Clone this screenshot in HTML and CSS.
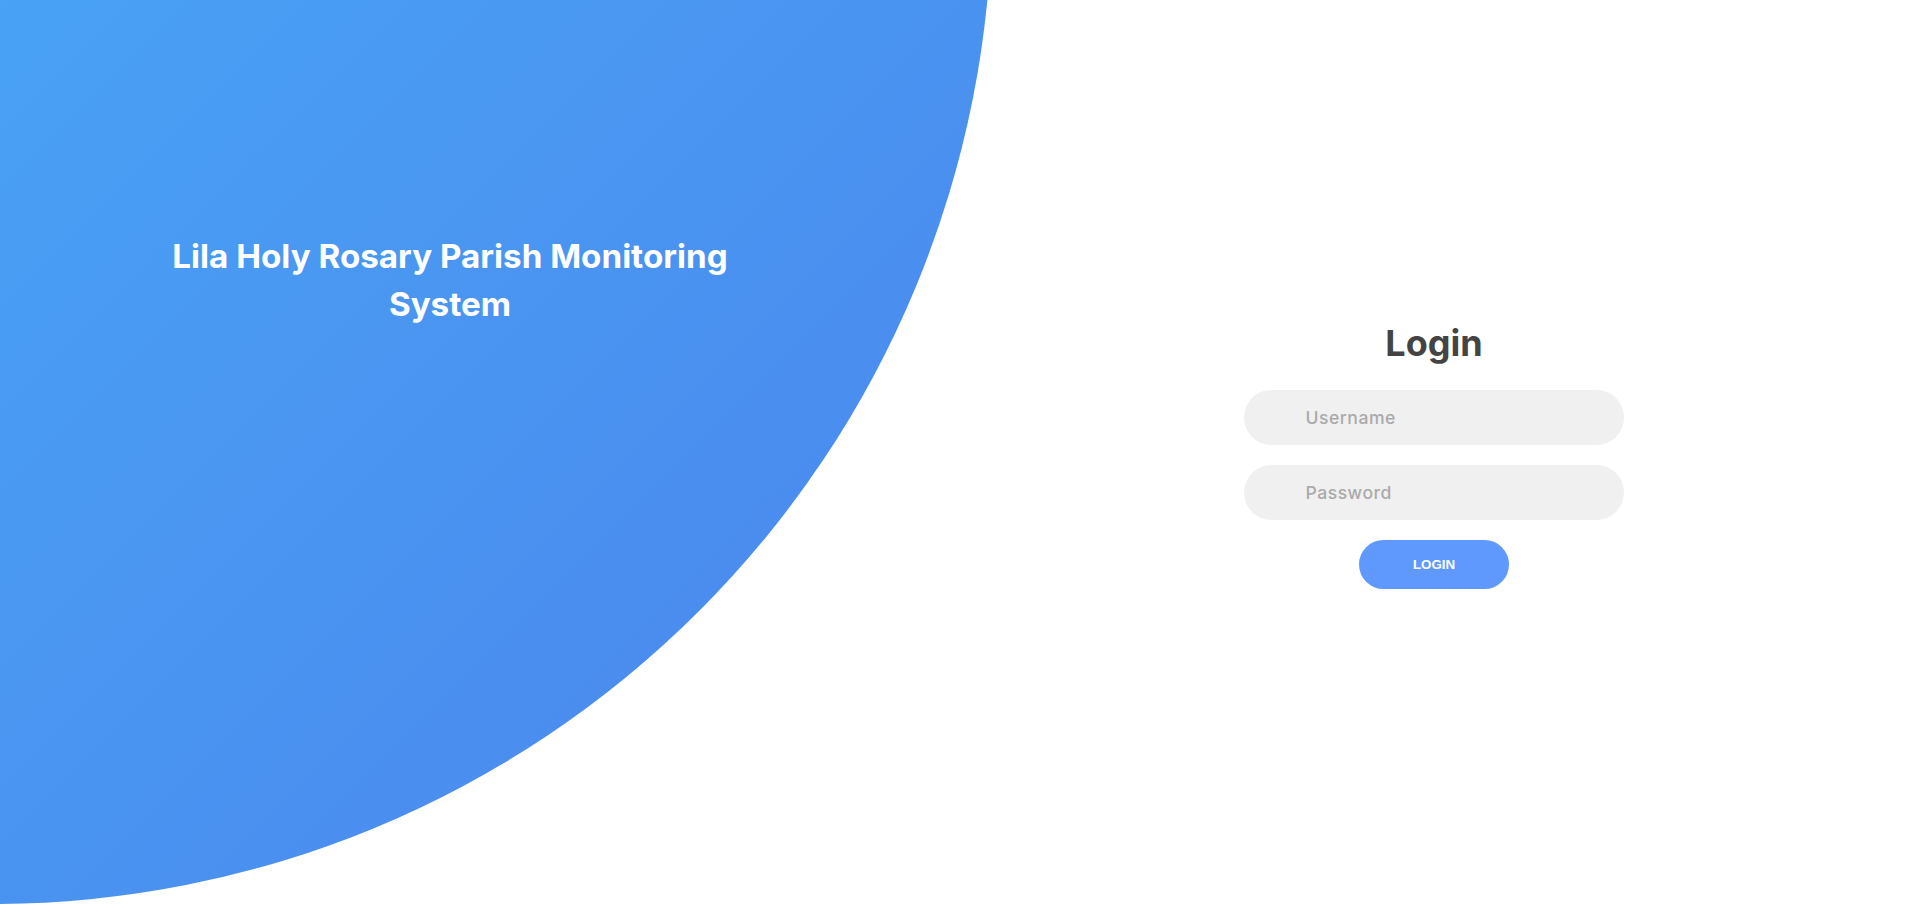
FILE: index.html
```html
<!DOCTYPE html>
<html lang="en">
<head>
<meta charset="utf-8">
<title>Login</title>
<link rel="stylesheet" href="styles.css">
</head>
<body>
<div class="container">
  <div class="circle"></div>
  <section class="panel">
    <h3 class="brand">Lila Holy Rosary Parish Monitoring System</h3>
  </section>
  <section class="form-side">
    <form class="sign-in-form" onsubmit="return false;">
      <h2 class="title">Login</h2>
      <div class="input-field">
        <span class="icon"></span>
        <input type="text" placeholder="Username">
      </div>
      <div class="input-field">
        <span class="icon"></span>
        <input type="password" placeholder="Password">
      </div>
      <button type="submit" class="btn">Login</button>
    </form>
  </section>
</div>
</body>
</html>
```

FILE: styles.css
```css
* {
  box-sizing: border-box;
}

html, body {
  margin: 0;
  padding: 0;
}

body {
  font-family: "Inter", "Open Sans", sans-serif;
  background: #fff;
}

.container {
  position: relative;
  width: 100%;
  height: 916px;
  overflow: hidden;
  display: grid;
  grid-template-columns: 954px 960px;
}

.circle {
  position: absolute;
  left: -1008px;
  top: -1096px;
  width: 2000px;
  height: 2000px;
  border-radius: 50%;
  background-image: linear-gradient(-45deg, #4b84ec 0%, #46c2fe 100%);
  z-index: 0;
}

.panel {
  position: relative;
  z-index: 1;
  padding: 232px 0 0 140px;
}

.brand {
  width: 620px;
  margin: 0;
  color: #fff;
  text-align: center;
  font-size: 33.2px;
  font-weight: 700;
  line-height: 48px;
}

.form-side {
  position: relative;
  z-index: 1;
  display: flex;
  align-items: center;
  justify-content: center;
}

.sign-in-form {
  display: flex;
  flex-direction: column;
  align-items: center;
  width: 380px;
}

.title {
  margin: 0 0 10px;
  font-size: 36px;
  font-weight: 700;
  color: #444;
  line-height: 52.8px;
}

.input-field {
  width: 380px;
  height: 55px;
  margin: 10px 0;
  padding: 0 6.4px;
  border-radius: 55px;
  background: #f0f0f0;
  display: grid;
  grid-template-columns: 15% 85%;
}

.input-field input {
  background: none;
  border: none;
  outline: none;
  padding: 1px 0;
  font-family: "Inter", "Open Sans", sans-serif;
  font-size: 17.6px;
  font-weight: 600;
  color: #333;
  line-height: 1;
  letter-spacing: 0.5px;
}

.input-field input::placeholder {
  color: #aaa;
  font-weight: 500;
}

.btn {
  width: 150px;
  height: 49px;
  margin: 10px 0;
  border: none;
  border-radius: 49px;
  background: #5f99fd;
  color: #fff;
  font-family: "Liberation Sans", Arial, sans-serif;
  font-size: 13.333px;
  font-weight: 700;
  text-transform: uppercase;
  cursor: pointer;
}
```
